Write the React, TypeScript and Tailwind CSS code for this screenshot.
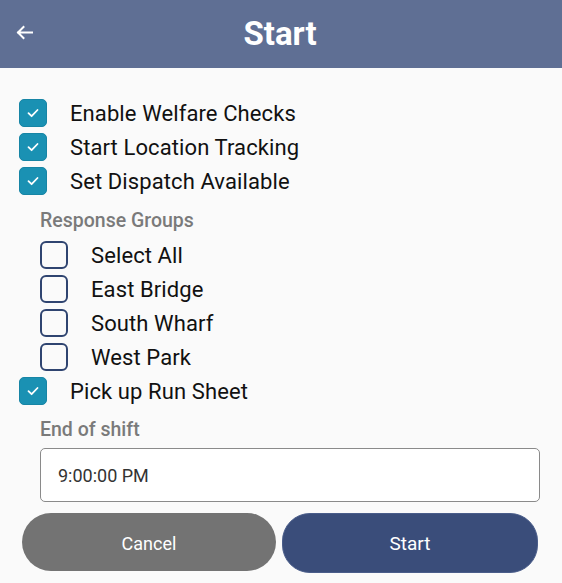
import React from "react";

function Checked() {
  return (
    <div className="w-[28px] h-[28px] rounded-[5px] bg-[#1a91b3] border border-[#1785a5] flex items-center justify-center shrink-0">
      <svg width="14" height="14" viewBox="0 0 14 14" fill="none">
        <path d="M2.5 7.2 L5.6 10.2 L11.5 4" stroke="white" strokeWidth="1.8" strokeLinecap="round" strokeLinejoin="round" />
      </svg>
    </div>
  );
}

function Unchecked() {
  return <div className="w-[28px] h-[28px] rounded-[6px] border-[2.5px] border-[#2f4470] shrink-0" />;
}

function Row({ checked, label, indent }: { checked: boolean; label: string; indent?: boolean }) {
  return (
    <div className={`h-[34px] flex items-center ${indent ? "pl-[40px]" : "pl-[19px]"}`}>
      {checked ? <Checked /> : <Unchecked />}
      <span className="ml-[23px] text-[22px] tracking-[0.1px] text-[#111]">{label}</span>
    </div>
  );
}

export default function App() {
  return (
    <div className="w-[562px] h-[583px] bg-[#fafafa] flex flex-col" style={{ fontFamily: "Roboto, 'Liberation Sans', sans-serif" }}>
      <div className="h-[68px] bg-[#5f6f94] relative flex items-center justify-center shrink-0">
        <svg className="absolute left-[16px] top-[25px]" width="17" height="15" viewBox="0 0 17 15" fill="none">
          <path d="M16 7.5 H2 M7.5 2 L2 7.5 L7.5 13" stroke="white" strokeWidth="2" strokeLinecap="square" />
        </svg>
        <span className="text-white font-bold text-[33px] ml-[-2px]">Start</span>
      </div>
      <div className="pt-[28px] flex flex-col">
        <Row checked label="Enable Welfare Checks" />
        <Row checked label="Start Location Tracking" />
        <Row checked label="Set Dispatch Available" />
        <div className="h-[40px] flex items-center pl-[40px] pt-[5px] text-[19.5px] font-medium text-[#7a7a7a]">Response Groups</div>
        <Row checked={false} indent label="Select All" />
        <Row checked={false} indent label="East Bridge" />
        <Row checked={false} indent label="South Wharf" />
        <Row checked={false} indent label="West Park" />
        <Row checked label="Pick up Run Sheet" />
        <div className="h-[40px] flex items-center pl-[40px] pt-[4px] text-[19.5px] font-medium text-[#7a7a7a]">End of shift</div>
        <div className="px-[40px] pr-[22px]">
          <div className="h-[54px] border border-[#8a8a8a] rounded-[5px] bg-white flex items-center pl-[17px] pt-[1px] text-[18px] text-[#333]">9:00:00 PM</div>
        </div>
        <div className="mt-[11px] flex items-start gap-[6px] pl-[22px] pr-[24px]">
          <button className="flex-1 h-[58px] rounded-[29px] bg-[#737373] text-white text-[18px] pt-[2px]">Cancel</button>
          <button className="flex-1 h-[60px] rounded-[28px] bg-[#3a4d7a] border border-[#4a5d8a] text-white text-[19px] pt-[2px]">Start</button>
        </div>
      </div>
    </div>
  );
}
